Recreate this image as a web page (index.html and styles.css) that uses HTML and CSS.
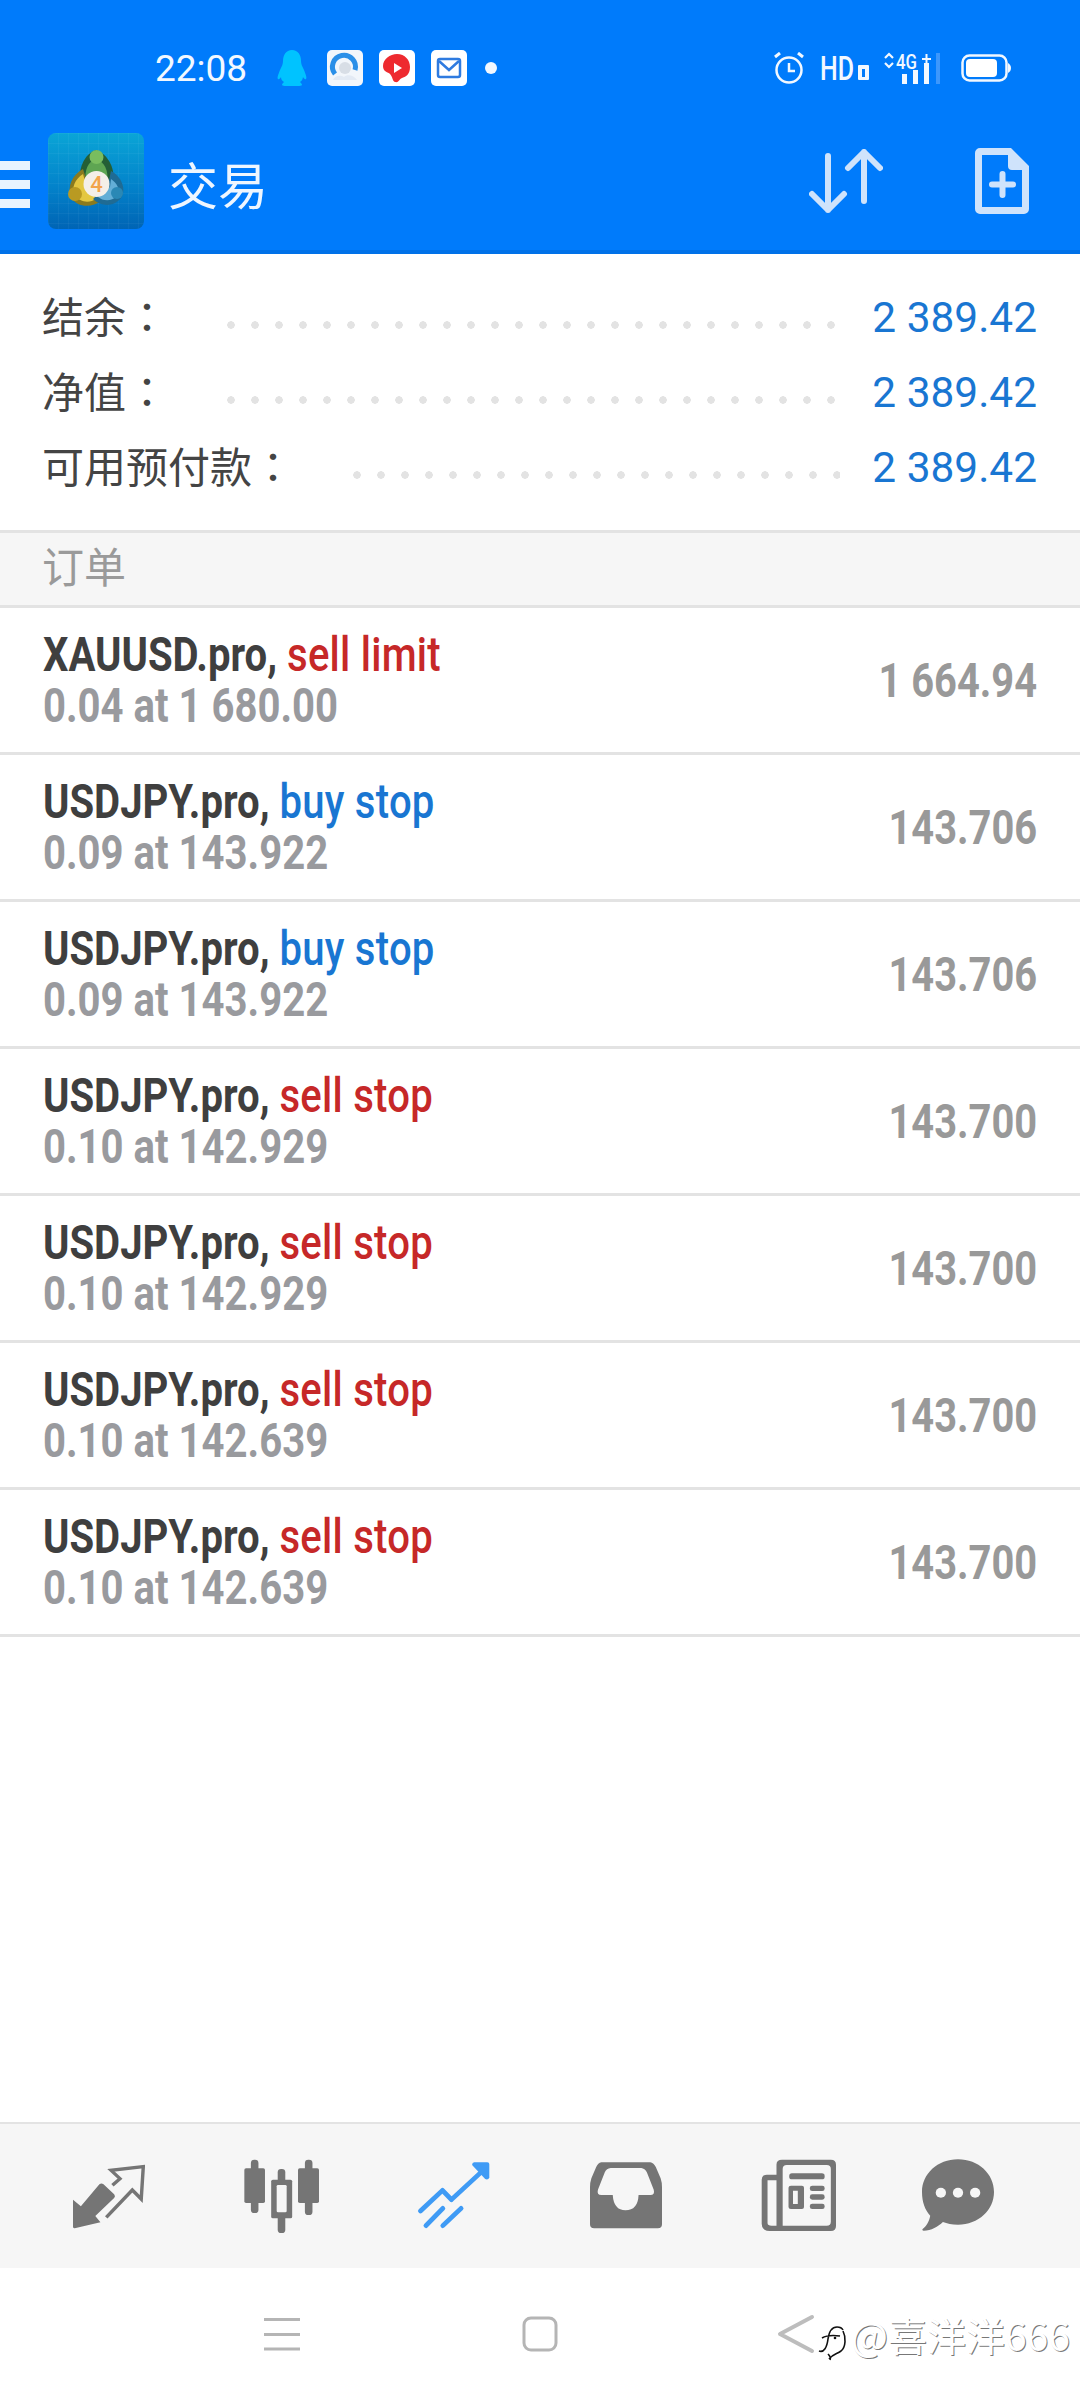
FILE: index.html
```html
<!DOCTYPE html>
<html lang="zh-CN">
<head>
  <meta charset="UTF-8" />
  <meta name="viewport" content="width=device-width, initial-scale=1.0" />
  <title>交易</title>
  <link rel="stylesheet" href="styles.css">
</head>
<body>

  <header class="top">
    <div class="status">
      <span class="time">22:08</span>
      <svg class="qq" viewBox="0 0 30 36" width="30" height="36"><path fill="#00c3ff" d="M15 0c6 0 9 5 9 11 0 3 1 5 3 9 2 5 3 8 2 9-1 .6-2-.4-3-2-.3 2-1 4-3 5 1 1 2 2 2 3 0 1-4 1-10 1s-10 0-10-1c0-1 1-2 2-3-2-1-3-3-3-5-1 1.600-2 2.600-3 2-1-1 0-4 2-9 2-4 3-6 3-9C6 5 9 0 15 0z"/></svg>
      <svg class="app" viewBox="0 0 36 36" width="36" height="36"><rect width="36" height="36" rx="5" fill="#f2f6fb"/><path d="M8 24a11.500 11.500 0 1 1 20-4" fill="none" stroke="#2a8fe8" stroke-width="5"/><circle cx="18" cy="18" r="6" fill="#d8dee6"/><path d="M6 30c2-5 8-5 11-3 3-3 10-2 13 3z" fill="#e3eaf4"/></svg>
      <svg class="app" viewBox="0 0 36 36" width="36" height="36"><rect width="36" height="36" rx="5" fill="#fff"/><path d="M18 4c8 0 13 6 13 13 0 8-5 10-8 11-3 1-3 5-7 4-3-1-2-5-5-8-2-2-7-2-7-8C4 9 11 4 18 4z" fill="#ee2a2f"/><path d="M15 13l8 5-8 5z" fill="#fff"/></svg>
      <svg class="app" viewBox="0 0 36 36" width="36" height="36"><rect width="36" height="36" rx="5" fill="#fff"/><rect x="7" y="9" width="22" height="18" rx="2" fill="none" stroke="#2f7be0" stroke-width="2.500"/><path d="M8 11l10 9 10-9" fill="none" stroke="#2f7be0" stroke-width="2.500"/></svg>
      <span class="dot"></span>
      <span class="status-right">
        <svg viewBox="0 0 30 32" width="30" height="32"><circle cx="15" cy="18" r="12.500" fill="none" stroke="#f2f8ff" stroke-width="2.500"/><path d="M15 11v8h6" fill="none" stroke="#f2f8ff" stroke-width="2.500"/><path d="M1 5l5-4M29 5l-5-4" stroke="#f2f8ff" stroke-width="3"/></svg>
        <svg class="hd" viewBox="0 -7 50 40" width="50" height="40"><text x="0" y="25" textLength="34" lengthAdjust="spacingAndGlyphs" class="hd-text">HD</text><rect x="38" y="10" width="11" height="15" rx="1" fill="#f2f8ff"/><rect x="42" y="14" width="3" height="8" fill="#007bfb"/></svg>
        <svg class="signal" viewBox="0 -4 58 40" width="58" height="40"><path d="M1 6l4-4 4 4M1 11l4 4 4-4" fill="none" stroke="#f2f8ff" stroke-width="2.200"/><text x="12" y="17" textLength="21" lengthAdjust="spacingAndGlyphs" class="sig-text">4G</text><path d="M38 7h9M42.500 2v10" stroke="#f2f8ff" stroke-width="2"/><rect x="18" y="22" width="5" height="10" fill="#f2f8ff"/><rect x="29" y="18" width="5" height="14" fill="#f2f8ff"/><rect x="40" y="11" width="5" height="21" fill="#f2f8ff"/><rect x="52" y="1" width="4" height="31" fill="#3d97fc"/></svg>
        <svg class="batt" viewBox="0 0 50 28" width="50" height="28"><rect x="1.500" y="1.500" width="44" height="25" rx="7" fill="none" stroke="#f2f8ff" stroke-width="2.500"/><rect x="5" y="5" width="31" height="18" rx="4" fill="#fff"/><path d="M47 9c2 1 3 3 3 5s-1 4-3 5z" fill="#f2f8ff"/></svg>
      </span>
    </div>
    <div class="toolbar">
      <div class="burger"><span></span><span></span><span></span></div>
      <svg class="logo" viewBox="0 0 96 96" width="96" height="96">
        <defs>
          <linearGradient id="logoBg" x1="0" y1="0" x2="0" y2="1"><stop offset="0" stop-color="#0aa5d6"/><stop offset=".55" stop-color="#0383cb"/><stop offset="1" stop-color="#0064b4"/></linearGradient>
          <pattern id="logoGrid" width="10" height="10" patternUnits="userSpaceOnUse"><path d="M10 0H0V10" fill="none" stroke="#fff" stroke-opacity=".08"/></pattern>
        </defs>
        <rect width="96" height="96" rx="8" fill="url(#logoBg)"/>
        <rect width="96" height="96" rx="8" fill="url(#logoGrid)"/>
        <path d="M48 17C36 21 29 37 33 52L64 52C69 37 60 21 48 17z" fill="#245f35"/>
        <path d="M48 26C40 28 36 38 38 48L59 48C61 38 56 28 48 26z" fill="#5ea552"/>
        <path d="M35 36C24 42 19 54 23 64 29 75 44 75 53 68L40 52z" fill="#8a7a1e"/>
        <path d="M35 41C27 46 23 55 27 62 32 70 42 70 48 66L38 52z" fill="#e4c740"/>
        <path d="M63 38C73 43 79 56 73 65 65 75 52 73 45 66L60 52z" fill="#1f6b94"/>
        <path d="M63 46C69 50 73 57 69 63 63 69 55 68 50 64L62 54z" fill="#63aed6"/>
        <circle cx="48.500" cy="24" r="7" fill="#79bd5f"/>
        <circle cx="27" cy="61" r="7" fill="#b99a22"/>
        <circle cx="69" cy="60" r="6" fill="#2a88b5"/>
        <circle cx="48.500" cy="51" r="13" fill="#f4efe8"/>
        <text x="48.500" y="59" class="logo-num">4</text>
      </svg>
      <h1 class="title">交易</h1>
      <svg class="tool-arrows" viewBox="0 0 74 64" width="74" height="64"><path d="M19 7v54M3 45l16 16 16-16M55 52V3M39 19L55 3l16 16" fill="none" stroke="#cfe3fb" stroke-width="6" stroke-linecap="round" stroke-linejoin="round"/></svg>
      <svg class="tool-doc" viewBox="0 0 54 66" width="54" height="66"><path fill="#cfe3fb" fill-rule="evenodd" d="M5 0H36L54 18V61a5 5 0 0 1-5 5H5a5 5 0 0 1-5-5V5a5 5 0 0 1 5-5zM7 7V59H47V22H37q-4 0-4-4V7z"/><path d="M27.500 26v21M17 36.500h21" stroke="#cfe3fb" stroke-width="6" stroke-linecap="round"/></svg>
    </div>
  </header>

  <section class="summary">
    <div class="sum-row"><span class="sum-label">结余<span class="colon" lang="zh-TW">：</span></span><span class="leader"></span><span class="sum-value">2 389.42</span></div>
    <div class="sum-row"><span class="sum-label">净值<span class="colon" lang="zh-TW">：</span></span><span class="leader"></span><span class="sum-value">2 389.42</span></div>
    <div class="sum-row"><span class="sum-label">可用预付款<span class="colon" lang="zh-TW">：</span></span><span class="leader"></span><span class="sum-value">2 389.42</span></div>
  </section>

  <div class="section-head">订单</div>

  <main class="orders">
    <div class="order">
      <div class="order-left"><div class="line-top"><b>XAUUSD.pro,</b> <span class="sell">sell limit</span></div><div class="line-sub">0.04 at 1 680.00</div></div>
      <div class="price">1 664.94</div>
    </div>
    <div class="order">
      <div class="order-left"><div class="line-top"><b>USDJPY.pro,</b> <span class="buy">buy stop</span></div><div class="line-sub">0.09 at 143.922</div></div>
      <div class="price">143.706</div>
    </div>
    <div class="order">
      <div class="order-left"><div class="line-top"><b>USDJPY.pro,</b> <span class="buy">buy stop</span></div><div class="line-sub">0.09 at 143.922</div></div>
      <div class="price">143.706</div>
    </div>
    <div class="order">
      <div class="order-left"><div class="line-top"><b>USDJPY.pro,</b> <span class="sell">sell stop</span></div><div class="line-sub">0.10 at 142.929</div></div>
      <div class="price">143.700</div>
    </div>
    <div class="order">
      <div class="order-left"><div class="line-top"><b>USDJPY.pro,</b> <span class="sell">sell stop</span></div><div class="line-sub">0.10 at 142.929</div></div>
      <div class="price">143.700</div>
    </div>
    <div class="order">
      <div class="order-left"><div class="line-top"><b>USDJPY.pro,</b> <span class="sell">sell stop</span></div><div class="line-sub">0.10 at 142.639</div></div>
      <div class="price">143.700</div>
    </div>
    <div class="order">
      <div class="order-left"><div class="line-top"><b>USDJPY.pro,</b> <span class="sell">sell stop</span></div><div class="line-sub">0.10 at 142.639</div></div>
      <div class="price">143.700</div>
    </div>
  </main>

  <nav class="tabs">
    <svg viewBox="215 170 210 225" width="72" height="75" preserveAspectRatio="none"><path fill="#757575" d="M215 292l23 20 54-66q6-5 12 0l31 30q5 6 0 11l-55 54 15 19-75 18q-5 0-5-5z"/><path d="M330 249l22-20-26-25 94-11-6 97-26-27-76 82" fill="none" stroke="#757575" stroke-width="10"/></svg>
    <svg viewBox="708 170 218 225" width="75" height="75" preserveAspectRatio="none"><g fill="#757575"><rect x="728" y="172" width="22" height="160" rx="10"/><rect x="709" y="198" width="60" height="104" rx="5"/><rect x="806" y="200" width="22" height="192" rx="10"/><rect x="787" y="232" width="61" height="116" rx="5"/><rect x="885" y="172" width="22" height="166" rx="10"/><rect x="865" y="198" width="61" height="104" rx="5"/></g><rect x="803" y="248" width="29" height="82" rx="4" fill="#f6f6f6"/></svg>
    <svg viewBox="1210 170 212 225" width="73" height="75" preserveAspectRatio="none"><path d="M1220 326l64-62 26 28 88-84" fill="none" stroke="#3f9bf5" stroke-width="14" stroke-linecap="round" stroke-linejoin="round"/><path d="M1376 180h38q6 0 6 6v40q-4 8-12 4l-38-42q0-8 6-8z" fill="#3f9bf5"/><path d="M1236 370l49-52M1285 370l53-52" stroke="#3f9bf5" stroke-width="14" stroke-linecap="round"/></svg>
    <svg viewBox="147 170 209 225" width="72" height="75" preserveAspectRatio="none"><path fill="#757575" fill-rule="evenodd" d="M180 180H322Q332 182 338 194L352 228Q356 240 356 255V366Q356 378 344 378H159Q147 378 147 366V255Q147 240 151 228L165 194Q170 182 180 180zM207 197Q195 198 190 210L170 262Q166 278 180 278H213Q216 324 250 324 286 324 288 278H322Q336 278 332 262L312 210Q306 198 296 197z"/></svg>
    <svg viewBox="645 170 218 225" width="75" height="75" preserveAspectRatio="none"><path fill="#757575" fill-rule="evenodd" d="M706 172H848Q863 172 863 187V371Q863 386 848 386H670Q647 386 647 364V232Q647 217 662 217H690V187Q690 172 706 172zM720 188Q708 188 708 200V370H836Q848 370 848 358V200Q848 188 836 188zM664 234V362Q664 370 676 370H690V234z"/><rect x="727" y="213" width="103" height="18" rx="8" fill="#757575"/><path fill="#757575" fill-rule="evenodd" d="M732 250H764Q770 250 770 256V314Q770 320 764 320H732Q725 320 725 314V256Q725 250 732 250zM738 265V305H752V265z"/><rect x="787" y="250" width="43" height="16" rx="7" fill="#757575"/><rect x="787" y="276" width="43" height="16" rx="7" fill="#757575"/><rect x="787" y="304" width="43" height="16" rx="7" fill="#757575"/></svg>
    <svg class="tab-chat" viewBox="1108 170 210 225" width="72" height="75" preserveAspectRatio="none"><path fill="#757575" d="M1213 171c60 0 105 44 105 98s-45 98-105 98c-18 0-32-3-44-8-14 14-34 26-56 26-4 0-5-3-3-5 14-12 20-28 22-40-15-17-24-40-24-71 0-54 45-98 105-98z"/><g fill="#f6f6f6"><ellipse cx="1163" cy="271" rx="15" ry="15"/><ellipse cx="1213" cy="271" rx="15" ry="15"/><ellipse cx="1263" cy="271" rx="15" ry="15"/></g></svg>
  </nav>

  <footer class="sysnav">
    <svg viewBox="0 0 36 34" width="36" height="34"><path d="M0 2.500h36M0 17.500h36M0 32h36" stroke="#b5b5b5" stroke-width="3"/></svg>
    <svg viewBox="0 0 36 36" width="36" height="36"><rect x="2" y="2" width="32" height="32" rx="7" fill="none" stroke="#b5b5b5" stroke-width="3"/></svg>
    <svg class="nav-back" viewBox="0 0 38 40" width="38" height="40"><path d="M35 3L3 20l32 17" fill="none" stroke="#bdbdbd" stroke-width="4" stroke-linecap="round" stroke-linejoin="round"/></svg>
    <div class="watermark">
      <svg class="fish" viewBox="0 0 30 38" width="30" height="38"><path d="M2 28c5 2 8-4 9-12 1-7 4-12 9-12 3 0 5 1 6 3M5 15c5-3 11-3 18-2M26 8c3 6 3 16-2 20-4 3-8 3-12 8M11 31c2 2 3 4 2 6" fill="none" stroke="#111" stroke-width="1.600"/><circle cx="18" cy="15" r="1.300" fill="#111"/></svg>
      <span>@喜洋洋666</span>
    </div>
  </footer>

</body>
</html>
```

FILE: styles.css
```css
* {
  box-sizing: border-box;
}

body {
  margin: 0;
  width: 1080px;
  height: 2400px;
  display: flex;
  flex-direction: column;
  background: white;
  font-family: Roboto, "Noto Sans CJK SC", sans-serif;
  overflow: hidden;
}

/* blue header */
.top {
  height: 254px;
  background: #007bfb;
  border-bottom: 4px solid #0071e8;
}

.status {
  height: 136px;
  padding: 0 69px 0 155px;
  display: flex;
  align-items: center;
  color: #f2f8ff;
}

.time {
  font-size: 37px;
  width: 92px;
  margin-right: 30px;
}

.qq {
  margin-right: 20px;
}

.app {
  margin-right: 16px;
}

.dot {
  width: 12px;
  height: 12px;
  border-radius: 50%;
  background: #f2f8ff;
  margin-left: 2px;
}

.status-right {
  margin-left: auto;
  display: flex;
  align-items: center;
}

.hd {
  margin-left: 16px;
}

.signal {
  margin-left: 14px;
}

.batt {
  margin-left: 19px;
}

.hd-text {
  font-family: Roboto, sans-serif;
  font-size: 33px;
  font-weight: 500;
  fill: #f2f8ff;
}

.sig-text {
  font-family: Roboto, sans-serif;
  font-size: 20px;
  font-weight: 500;
  fill: #f2f8ff;
}

.toolbar {
  height: 114px;
  display: flex;
  align-items: center;
  padding: 0 51px 24px 0;
}

.burger {
  width: 30px;
  margin-top: 6px;
  display: flex;
  flex-direction: column;
  gap: 10px;
}

.burger span {
  height: 9px;
  background: #e8f4ff;
}

.logo {
  margin-left: 18px;
}

.title {
  margin: 4px 0 0 24px;
  font-size: 50px;
  font-weight: 400;
  color: #eef6ff;
}

.tool-arrows {
  margin-left: auto;
}

.tool-doc {
  margin-left: 92px;
}

.logo-num {
  font-family: Roboto, sans-serif;
  font-size: 22px;
  font-weight: 500;
  fill: #f2a44a;
  text-anchor: middle;
}

/* balance block */
.summary {
  height: 276px;
  padding: 26px 43px 0 42px;
}

.sum-row {
  height: 75px;
  display: flex;
  align-items: center;
  font-size: 42px;
  color: #444;
}

.sum-label {
  margin-top: -7px;
}

.colon {
  font-family: "Noto Sans CJK TC", sans-serif;
}

.leader {
  flex: 1;
  height: 8px;
  margin: 14px 32px 0 59px;
  background: radial-gradient(circle at 4px 4px, #e3e3e3 3.5px, transparent 4px) left top / 24px 8px repeat-x;
}

.sum-value {
  color: #1976d2;
  font-size: 42.4px;
}

.section-head {
  height: 78px;
  padding: 0 0 10px 42px;
  display: flex;
  align-items: center;
  font-size: 42px;
  color: #9a9a9a;
  background: #f6f6f6;
  border-top: 3px solid #e3e3e3;
  border-bottom: 3px solid #e3e3e3;
}

/* order list */
.orders {
  flex: 1;
}

.order {
  height: 147px;
  padding: 0 43px;
  display: flex;
  align-items: center;
  justify-content: space-between;
  border-bottom: 3px solid #e3e3e3;
  font-size: 48px;
  line-height: 51px;
}

.line-top,
.line-sub {
  transform: scaleX(.835);
  transform-origin: left center;
  white-space: nowrap;
}

.line-top b {
  color: #3f3f3f;
}

.sell,
.buy {
  font-weight: 500;
  letter-spacing: .3px;
}

.sell {
  color: #c62828;
}

.buy {
  color: #1976d2;
}

.line-sub {
  font-weight: 700;
  color: #999a9e;
}

.price {
  font-weight: 700;
  color: #999;
  transform: scaleX(.83);
  transform-origin: right center;
  white-space: nowrap;
}

/* bottom tabs */
.tabs {
  height: 146px;
  padding: 0 23px;
  display: grid;
  grid-template-columns: repeat(6, 1fr);
  justify-items: center;
  align-items: center;
  background: #f6f6f6;
  border-top: 2px solid #e3e3e3;
}

.tab-chat {
  margin-right: 26px;
}

.sysnav {
  position: relative;
  height: 132px;
  padding: 0 153px;
  display: grid;
  grid-template-columns: repeat(3, 1fr);
  justify-items: center;
  align-items: center;
}

.nav-back {
  margin-right: 4px;
}

.watermark {
  position: absolute;
  left: 817px;
  top: 38px;
  display: flex;
  align-items: center;
  gap: 4px;
  font-family: "Noto Sans CJK SC", sans-serif;
  font-size: 39px;
  color: #fff;
  text-shadow: 1px 1px 0 #777;
  white-space: nowrap;
}

.fish {
  margin-top: 16px;
}
```
